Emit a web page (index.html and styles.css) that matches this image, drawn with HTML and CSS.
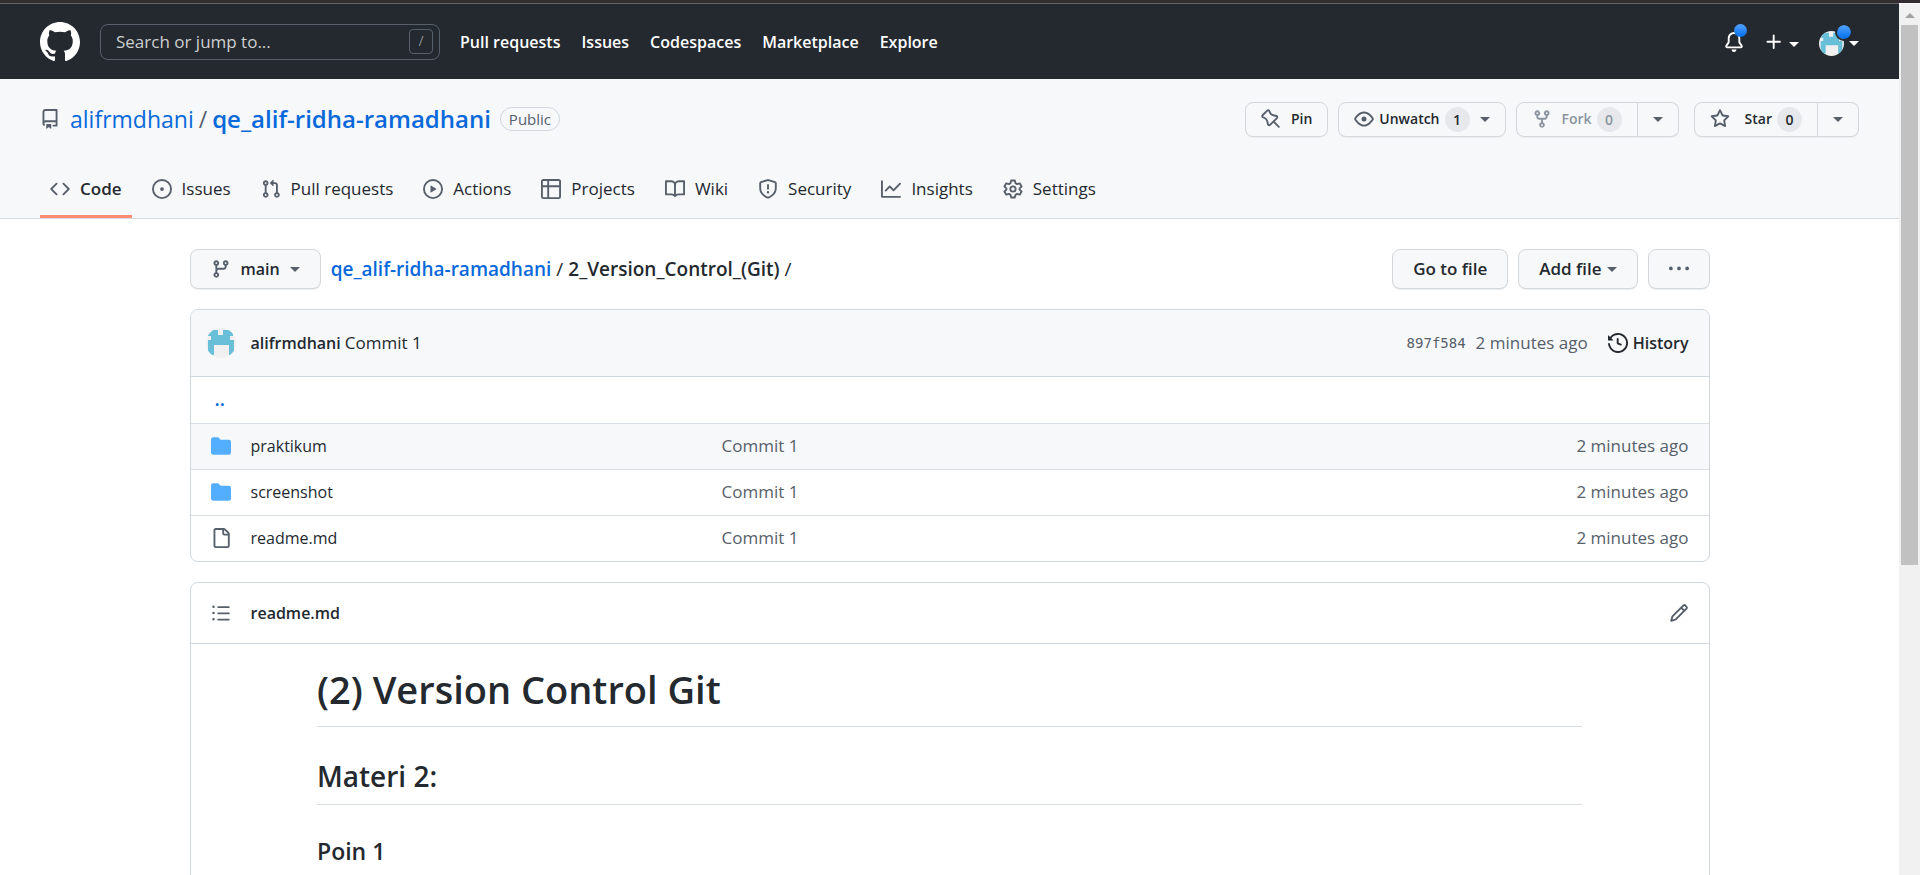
FILE: index.html
```html
<!DOCTYPE html>
<html lang="en">
<head>
<meta charset="utf-8">
<title>qe_alif-ridha-ramadhani/2_Version_Control_(Git)</title>
<link rel="stylesheet" href="styles.css">
</head>
<body>
<svg class="sprite" aria-hidden="true">
  <symbol id="mark" viewBox="0 0 16 16"><path d="M8 0C3.58 0 0 3.58 0 8c0 3.54 2.29 6.53 5.47 7.59.4.07.55-.17.55-.38 0-.19-.01-.82-.01-1.49-2.01.37-2.53-.49-2.69-.94-.09-.23-.48-.94-.82-1.13-.28-.15-.68-.52-.01-.53.63-.01 1.08.58 1.23.82.72 1.21 1.87.87 2.33.66.07-.52.28-.87.51-1.07-1.78-.2-3.64-.89-3.64-3.95 0-.87.31-1.59.82-2.15-.08-.2-.36-1.02.08-2.12 0 0 .67-.21 2.2.82.64-.18 1.32-.27 2-.27.68 0 1.36.09 2 .27 1.53-1.04 2.2-.82 2.2-.82.44 1.1.16 1.92.08 2.12.51.56.82 1.27.82 2.15 0 3.07-1.87 3.75-3.65 3.95.29.25.54.73.54 1.48 0 1.07-.01 1.93-.01 2.2 0 .21.15.46.55.38A8.013 8.013 0 0 0 16 8c0-4.42-3.58-8-8-8z"/></symbol>
  <symbol id="bell" viewBox="0 0 16 16"><path d="M8 16a2 2 0 001.985-1.75c.017-.137-.097-.25-.235-.25h-3.5c-.138 0-.252.113-.235.25A2 2 0 008 16z"/><path fill-rule="evenodd" d="M8 1.5A3.5 3.5 0 004.5 5v2.947c0 .346-.102.683-.294.97l-1.703 2.556a.018.018 0 00-.003.01l.001.006c0 .002.002.004.004.006a.017.017 0 00.006.004l.007.001h10.964l.007-.001a.016.016 0 00.006-.004.016.016 0 00.004-.006l.001-.007a.017.017 0 00-.003-.01l-1.703-2.554a1.75 1.75 0 01-.294-.97V5A3.5 3.5 0 008 1.5zM3 5a5 5 0 0110 0v2.947c0 .05.015.098.042.139l1.703 2.555A1.518 1.518 0 0113.482 13H2.518a1.518 1.518 0 01-1.263-2.36l1.703-2.554A.25.25 0 003 7.947V5z"/></symbol>
  <symbol id="plus" viewBox="0 0 16 16"><path d="M7.75 2a.75.75 0 01.75.75V7h4.25a.75.75 0 110 1.5H8.5v4.25a.75.75 0 11-1.5 0V8.5H2.75a.75.75 0 010-1.5H7V2.75A.75.75 0 017.75 2z"/></symbol>
  <symbol id="repo" viewBox="0 0 16 16"><path fill-rule="evenodd" d="M2 2.5A2.5 2.5 0 014.5 0h8.75a.75.75 0 01.75.75v12.5a.75.75 0 01-.75.75h-2.5a.75.75 0 110-1.5h1.75v-2h-8a1 1 0 00-.714 1.7.75.75 0 01-1.072 1.05A2.495 2.495 0 012 11.5v-9zm10.5-1V9h-8c-.356 0-.694.074-1 .208V2.5a1 1 0 011-1h8zM5 12.25v3.25a.25.25 0 00.4.2l1.45-1.087a.25.25 0 01.3 0L8.6 15.7a.25.25 0 00.4-.2v-3.25a.25.25 0 00-.25-.25h-3.5a.25.25 0 00-.25.25z"/></symbol>
  <symbol id="pin" viewBox="0 0 16 16"><path fill-rule="evenodd" d="M4.456.734a1.75 1.75 0 012.826.504l.613 1.327a3.081 3.081 0 002.084 1.707l2.454.584c1.332.317 1.8 1.972.832 2.94L11.06 10l3.72 3.72a.75.75 0 11-1.061 1.06L10 11.06l-2.204 2.205c-.968.968-2.623.5-2.94-.832l-.584-2.454a3.081 3.081 0 00-1.707-2.084l-1.327-.613a1.75 1.75 0 01-.504-2.826L4.456.734zM5.92 1.866a.25.25 0 00-.404-.072L1.794 5.516a.25.25 0 00.072.404l1.328.613A4.582 4.582 0 015.73 9.63l.584 2.454a.25.25 0 00.42.12l5.47-5.47a.25.25 0 00-.12-.42L9.63 5.73a4.581 4.581 0 01-3.098-2.537L5.92 1.866z"/></symbol>
  <symbol id="eye" viewBox="0 0 16 16"><path fill-rule="evenodd" d="M1.679 7.932c.412-.621 1.242-1.75 2.366-2.717C5.175 4.242 6.527 3.5 8 3.5c1.473 0 2.824.742 3.955 1.715 1.124.967 1.954 2.096 2.366 2.717a.119.119 0 010 .136c-.412.621-1.242 1.75-2.366 2.717C10.825 11.758 9.473 12.5 8 12.5c-1.473 0-2.824-.742-3.955-1.715C2.92 9.818 2.09 8.69 1.679 8.068a.119.119 0 010-.136zM8 2c-1.981 0-3.67.992-4.933 2.078C1.797 5.169.88 6.423.43 7.1a1.619 1.619 0 000 1.798c.45.678 1.367 1.932 2.637 3.024C4.329 13.008 6.019 14 8 14c1.981 0 3.67-.992 4.933-2.078 1.27-1.091 2.187-2.345 2.637-3.023a1.619 1.619 0 000-1.798c-.45-.678-1.367-1.932-2.637-3.023C11.671 2.992 9.981 2 8 2zm0 8a2 2 0 100-4 2 2 0 000 4z"/></symbol>
  <symbol id="fork" viewBox="0 0 16 16"><path fill-rule="evenodd" d="M5 3.25a.75.75 0 11-1.5 0 .75.75 0 011.5 0zm0 2.122a2.25 2.25 0 10-1.5 0v.878A2.25 2.25 0 005.75 8.5h1.5v2.128a2.251 2.251 0 101.5 0V8.5h1.5a2.25 2.25 0 002.25-2.25v-.878a2.25 2.25 0 10-1.5 0v.878a.75.75 0 01-.75.75h-4.5A.75.75 0 015 6.25v-.878zm3.75 7.378a.75.75 0 11-1.5 0 .75.75 0 011.5 0zm3-8.75a.75.75 0 100-1.5.75.75 0 000 1.5z"/></symbol>
  <symbol id="star" viewBox="0 0 16 16"><path fill-rule="evenodd" d="M8 .25a.75.75 0 01.673.418l1.882 3.815 4.21.612a.75.75 0 01.416 1.279l-3.046 2.97.719 4.192a.75.75 0 01-1.088.791L8 12.347l-3.766 1.98a.75.75 0 01-1.088-.79l.72-4.194L.818 6.374a.75.75 0 01.416-1.28l4.21-.611L7.327.668A.75.75 0 018 .25zm0 2.445L6.615 5.5a.75.75 0 01-.564.41l-3.097.45 2.24 2.184a.75.75 0 01.216.664l-.528 3.084 2.769-1.456a.75.75 0 01.698 0l2.77 1.456-.53-3.084a.75.75 0 01.216-.664l2.24-2.183-3.096-.45a.75.75 0 01-.564-.41L8 2.694z"/></symbol>
  <symbol id="code" viewBox="0 0 16 16"><path fill-rule="evenodd" d="M4.72 3.22a.75.75 0 011.06 1.06L2.06 8l3.72 3.72a.75.75 0 11-1.06 1.06L.47 8.53a.75.75 0 010-1.06l4.25-4.25zm6.56 0a.75.75 0 10-1.06 1.06L13.94 8l-3.72 3.72a.75.75 0 101.06 1.06l4.25-4.25a.75.75 0 000-1.06l-4.25-4.25z"/></symbol>
  <symbol id="issue" viewBox="0 0 16 16"><path d="M8 9.5a1.5 1.5 0 100-3 1.5 1.5 0 000 3z"/><path fill-rule="evenodd" d="M8 0a8 8 0 100 16A8 8 0 008 0zM1.5 8a6.5 6.5 0 1113 0 6.5 6.5 0 01-13 0z"/></symbol>
  <symbol id="pull" viewBox="0 0 16 16"><path fill-rule="evenodd" d="M7.177 3.073L9.573.677A.25.25 0 0110 .854v4.792a.25.25 0 01-.427.177L7.177 3.427a.25.25 0 010-.354zM3.75 2.5a.75.75 0 100 1.5.75.75 0 000-1.5zm-2.25.75a2.25 2.25 0 113 2.122v5.256a2.251 2.251 0 11-1.5 0V5.372A2.25 2.25 0 011.5 3.25zM11 2.5h-1V4h1a1 1 0 011 1v5.628a2.251 2.251 0 101.5 0V5A2.5 2.5 0 0011 2.5zm1 10.25a.75.75 0 111.5 0 .75.75 0 01-1.5 0zM3.75 12a.75.75 0 100 1.5.75.75 0 000-1.5z"/></symbol>
  <symbol id="play" viewBox="0 0 16 16"><path fill-rule="evenodd" d="M1.5 8a6.5 6.5 0 1113 0 6.5 6.5 0 01-13 0zM8 0a8 8 0 100 16A8 8 0 008 0zM6.379 5.227A.25.25 0 006 5.442v5.117a.25.25 0 00.379.214l4.264-2.559a.25.25 0 000-.428L6.379 5.227z"/></symbol>
  <symbol id="table" viewBox="0 0 16 16"><path fill-rule="evenodd" d="M0 1.75C0 .784.784 0 1.75 0h12.5C15.216 0 16 .784 16 1.75v12.5A1.75 1.75 0 0114.25 16H1.75A1.75 1.75 0 010 14.25V1.75zM1.5 6.5v7.75c0 .138.112.25.25.25H5v-8H1.500zM5 5H1.500V1.750a.25.25 0 01.25-.25H5V5zm1.500 1.500v8h7.750a.25.25 0 00.25-.25V6.500h-8zm8-1.500h-8V1.500h7.750a.25.25 0 01.25.25V5z"/></symbol>
  <symbol id="book" viewBox="0 0 16 16"><path fill-rule="evenodd" d="M0 1.75A.75.75 0 01.75 1h4.253c1.227 0 2.317.59 3 1.501A3.744 3.744 0 0111.006 1h4.245a.75.75 0 01.75.75v10.5a.75.75 0 01-.75.75h-4.507a2.25 2.25 0 00-1.591.659l-.622.621a.75.75 0 01-1.060 0l-.622-.621A2.250 2.250 0 005.258 13H.750a.75.75 0 01-.75-.75V1.750zm8.755 3a2.250 2.250 0 012.250-2.250H14.500v9h-3.757c-.71 0-1.400.201-1.992.572l.004-7.322zm-1.504 7.324l.004-5.073-.002-2.253A2.250 2.250 0 005.003 2.500H1.500v9h3.757a3.750 3.750 0 011.994.574z"/></symbol>
  <symbol id="shield" viewBox="0 0 16 16"><path fill-rule="evenodd" d="M7.467.133a1.750 1.750 0 011.066 0l5.250 1.680A1.750 1.750 0 0115 3.480V7c0 1.566-.32 3.182-1.303 4.682-.983 1.498-2.585 2.813-5.032 3.855a1.700 1.700 0 01-1.330 0c-2.447-1.042-4.049-2.357-5.032-3.855C1.320 10.182 1 8.566 1 7V3.480a1.750 1.750 0 011.217-1.667l5.250-1.680zm.61 1.429a.25.25 0 00-.153 0l-5.250 1.680a.25.25 0 00-.174.238V7c0 1.358.275 2.666 1.057 3.860.784 1.194 2.121 2.340 4.366 3.297a.2.2 0 00.154 0c2.245-.956 3.582-2.104 4.366-3.298C13.225 9.666 13.500 8.360 13.500 7V3.480a.25.25 0 00-.174-.237l-5.250-1.680zM9 10.500a1 1 0 11-2 0 1 1 0 012 0zm-.25-5.750a.75.75 0 00-1.500 0v3a.75.75 0 001.500 0v-3z"/></symbol>
  <symbol id="graph" viewBox="0 0 16 16"><path fill-rule="evenodd" d="M1.500 1.750a.75.75 0 00-1.500 0v12.500c0 .414.336.75.75.75h14.500a.75.75 0 000-1.500H1.500V1.750zm14.280 2.530a.75.75 0 00-1.060-1.060L10 7.940 7.530 5.470a.75.75 0 00-1.060 0L3.220 8.720a.75.75 0 001.060 1.060L7 7.060l2.470 2.470a.75.75 0 001.060 0l5.250-5.250z"/></symbol>
  <symbol id="gear" viewBox="0 0 24 24"><path fill="none" stroke="currentColor" stroke-width="2.200" stroke-linejoin="round" d="M9.800 1.800h4.400l.8 3.200 1.900 1.100 3.200-.9 2.200 3.800-2.400 2.300v1.400l2.400 2.300-2.200 3.800-3.200-.9-1.900 1.100-.8 3.200H9.800L9 19l-1.900-1.100-3.200.9L1.700 15l2.400-2.300v-1.400L1.700 9l2.200-3.800 3.200.9L9 5z"/><circle cx="12" cy="12" r="3.200" fill="none" stroke="currentColor" stroke-width="2.200"/></symbol>
  <symbol id="branch" viewBox="0 0 16 16"><path fill-rule="evenodd" d="M11.750 2.500a.75.75 0 100 1.500.75.75 0 000-1.500zm-2.250.75a2.250 2.250 0 113 2.122V6A2.500 2.500 0 0110 8.500H6a1 1 0 00-1 1v1.128a2.251 2.251 0 11-1.500 0V5.372a2.250 2.250 0 111.500 0v1.836A2.492 2.492 0 016 7h4a1 1 0 001-1v-.628A2.250 2.250 0 019.500 3.250zM4.250 12a.75.75 0 100 1.500.75.75 0 000-1.500zM3.500 3.250a.75.75 0 111.500 0 .75.75 0 01-1.500 0z"/></symbol>
  <symbol id="dots" viewBox="0 0 16 16"><path d="M8 9a1.500 1.500 0 100-3 1.500 1.500 0 000 3zM1.500 9a1.500 1.500 0 100-3 1.500 1.500 0 000 3zm13 0a1.500 1.500 0 100-3 1.500 1.500 0 000 3z"/></symbol>
  <symbol id="history" viewBox="0 0 16 16"><path fill-rule="evenodd" d="M1.643 3.143L.427 1.927A.25.25 0 000 2.104V5.750c0 .138.112.25.25.25h3.646a.25.25 0 00.177-.427L2.715 4.215a6.500 6.500 0 11-1.180 4.458.75.75 0 10-1.493.154 8.001 8.001 0 101.600-5.684zM7.750 4a.75.75 0 01.75.75v2.992l2.028.812a.75.75 0 01-.557 1.392l-2.500-1A.75.75 0 017 8.250v-3.500A.75.75 0 017.750 4z"/></symbol>
  <symbol id="folder" viewBox="0 0 16 16"><path d="M1.750 1A1.750 1.750 0 000 2.750v10.500C0 14.216.784 15 1.750 15h12.500A1.750 1.750 0 0016 13.250v-8.500A1.750 1.750 0 0014.250 3h-6.500a.25.25 0 01-.2-.1l-.9-1.200c-.33-.44-.85-.7-1.400-.7h-3.500z"/></symbol>
  <symbol id="file" viewBox="0 0 16 16"><path fill-rule="evenodd" d="M3.750 1.500a.25.25 0 00-.25.25v12.500c0 .138.112.25.25.25h9.500a.25.25 0 00.25-.25V6h-2.750A1.750 1.750 0 019 4.250V1.500H3.750zm6.750.062V4.250c0 .138.112.25.25.25h2.688l-.011-.013-2.914-2.914-.013-.011zM2 1.750C2 .784 2.784 0 3.750 0h6.586c.464 0 .909.184 1.237.513l2.914 2.914c.329.328.513.773.513 1.237v9.586A1.750 1.750 0 0113.250 16h-9.500A1.750 1.750 0 012 14.250V1.750z"/></symbol>
  <symbol id="list" viewBox="0 0 16 16"><path fill-rule="evenodd" d="M2 4a1 1 0 100-2 1 1 0 000 2zm3.750-1.500a.75.75 0 000 1.500h8.500a.75.75 0 000-1.500h-8.500zm0 5a.75.75 0 000 1.500h8.500a.75.75 0 000-1.500h-8.500zm0 5a.75.75 0 000 1.500h8.500a.75.75 0 000-1.500h-8.500zM3 8a1 1 0 11-2 0 1 1 0 012 0zm-1 6a1 1 0 100-2 1 1 0 000 2z"/></symbol>
  <symbol id="pencil" viewBox="0 0 16 16"><path fill-rule="evenodd" d="M11.013 1.427a1.750 1.750 0 012.474 0l1.086 1.086a1.750 1.750 0 010 2.474l-8.610 8.610c-.21.21-.47.364-.756.445l-3.251.93a.75.75 0 01-.927-.928l.929-3.250a1.750 1.750 0 01.445-.758l8.610-8.610zm1.414 1.060a.25.25 0 00-.354 0L10.811 3.750l1.439 1.440 1.263-1.263a.25.25 0 000-.354l-1.086-1.086zM11.189 6.250L9.750 4.810l-6.286 6.287a.25.25 0 00-.064.108l-.558 1.953 1.953-.558a.249.249 0 00.108-.064l6.286-6.286z"/></symbol>
  <symbol id="avatar" viewBox="0 0 30 30"><path fill="#f0f0f0" d="M0 0h30v30H0z"/><path fill="#69bfd8" d="M2 2h10v5h5V2h10v6h-3v4h4v15h-5V17H8v10H2V12h3V8H2z"/></symbol>
</svg>
<div class="window">
  <div class="page">
    <header class="topbar">
      <a class="logo" href="#" aria-label="Homepage"><svg><use href="#mark"/></svg></a>
      <label class="search"><input type="text" aria-label="Search" placeholder="Search or jump to..."><kbd>/</kbd></label>
      <nav class="topnav">
        <a href="#">Pull requests</a><a href="#">Issues</a><a href="#">Codespaces</a><a href="#">Marketplace</a><a href="#">Explore</a>
      </nav>
      <div class="tools">
        <button class="tool bell" aria-label="Notifications"><svg class="icon"><use href="#bell"/></svg><span class="dot"></span></button>
        <button class="tool create" aria-label="Create new"><svg class="icon"><use href="#plus"/></svg><span class="caret"></span></button>
        <button class="tool user" aria-label="Account"><svg class="face"><use href="#avatar"/></svg><span class="dot ringed"></span><span class="caret"></span></button>
      </div>
    </header>

    <section class="repohead">
      <div class="titlerow">
        <svg class="icon muted"><use href="#repo"/></svg>
        <h1 class="title"><a href="#">alifrmdhani</a><span>/</span><a class="strong" href="#">qe_alif-ridha-ramadhani</a></h1>
        <span class="pill">Public</span>
        <div class="actions">
          <button class="btn small"><svg class="icon"><use href="#pin"/></svg><span class="lead">Pin</span></button>
          <button class="btn small watch"><svg class="icon"><use href="#eye"/></svg>Unwatch<span class="count">1</span><span class="caret"></span></button>
          <div class="split forks">
            <button class="btn small" disabled><svg class="icon"><use href="#fork"/></svg><span class="lead">Fork</span><span class="count">0</span></button><button class="btn small more" aria-label="Fork options"><span class="caret"></span></button>
          </div>
          <div class="split stars">
            <button class="btn small"><svg class="icon"><use href="#star"/></svg><span class="lead">Star</span><span class="count">0</span></button><button class="btn small more" aria-label="Star options"><span class="caret"></span></button>
          </div>
        </div>
      </div>
      <nav class="tabs">
        <a class="current" href="#"><svg class="icon"><use href="#code"/></svg>Code</a>
        <a href="#"><svg class="icon"><use href="#issue"/></svg>Issues</a>
        <a href="#"><svg class="icon"><use href="#pull"/></svg>Pull requests</a>
        <a href="#"><svg class="icon"><use href="#play"/></svg>Actions</a>
        <a href="#"><svg class="icon"><use href="#table"/></svg>Projects</a>
        <a href="#"><svg class="icon"><use href="#book"/></svg>Wiki</a>
        <a href="#"><svg class="icon"><use href="#shield"/></svg>Security</a>
        <a href="#"><svg class="icon"><use href="#graph"/></svg>Insights</a>
        <a href="#"><svg class="icon"><use href="#gear"/></svg>Settings</a>
      </nav>
    </section>

    <main class="content">
      <div class="filebar">
        <button class="btn branch"><svg class="icon"><use href="#branch"/></svg>main<span class="caret"></span></button>
        <div class="crumbs"><a href="#">qe_alif-ridha-ramadhani</a><span>/</span><strong>2_Version_Control_(Git)</strong><span>/</span></div>
        <button class="btn">Go to file</button>
        <button class="btn add">Add file<span class="caret"></span></button>
        <button class="btn kebab" aria-label="More options"><svg class="icon"><use href="#dots"/></svg></button>
      </div>

      <section class="box">
        <div class="commit">
          <svg class="portrait"><use href="#avatar"/></svg>
          <p class="message"><a class="author" href="#">alifrmdhani</a> <a class="subject" href="#">Commit 1</a></p>
          <a class="sha" href="#">897f584</a>
          <span class="when">2 minutes ago</span>
          <a class="history" href="#"><svg class="icon"><use href="#history"/></svg>History</a>
        </div>
        <table class="files">
          <tbody>
            <tr><td class="kind"><a class="up" href="#">..</a></td><td class="name"></td><td></td><td></td></tr>
            <tr class="hover"><td class="kind"><svg class="icon folder"><use href="#folder"/></svg></td><td class="name"><a href="#">praktikum</a></td><td class="note">Commit 1</td><td class="age">2 minutes ago</td></tr>
            <tr><td class="kind"><svg class="icon folder"><use href="#folder"/></svg></td><td class="name"><a href="#">screenshot</a></td><td class="note">Commit 1</td><td class="age">2 minutes ago</td></tr>
            <tr><td class="kind"><svg class="icon muted"><use href="#file"/></svg></td><td class="name"><a href="#">readme.md</a></td><td class="note">Commit 1</td><td class="age">2 minutes ago</td></tr>
          </tbody>
        </table>
      </section>

      <section class="box readme">
        <div class="readmehead">
          <button class="plain" aria-label="Contents"><svg class="icon"><use href="#list"/></svg></button>
          <a href="#">readme.md</a>
          <button class="plain edit" aria-label="Edit file"><svg class="icon"><use href="#pencil"/></svg></button>
        </div>
        <article class="markdown">
          <h1>(2) Version Control Git</h1>
          <h2>Materi 2:</h2>
          <h3>Poin 1</h3>
        </article>
      </section>
    </main>
  </div>
  <div class="scrollbar" aria-hidden="true"><span class="arrow"></span><span class="thumb"></span></div>
</div>
</body>
</html>
```
FILE: styles.css
```css
* { box-sizing: border-box; }

body {
  margin: 0;
  background: #fff;
  color: #24292f;
  font: 16px/26px "Open Sans", "Noto Sans", sans-serif;
}

a { color: inherit; text-decoration: none; }
h1, h2, h3, p { margin: 0; }
button, input { font: inherit; color: inherit; }
svg { display: block; fill: currentColor; }

.sprite { position: absolute; width: 0; height: 0; }
.icon { width: 20px; height: 20px; flex: none; }
.muted { color: #57606a; }

.caret {
  flex: none;
  width: 10px;
  border: 5px solid transparent;
  border-top-color: currentColor;
  border-bottom: 0;
}

.window {
  display: flex;
  height: 100vh;
  overflow: hidden;
  border-top: 3px solid #332d32;
}
.page { flex: 1; min-width: 0; border-top: 1px solid #666; }

/* Scrollbar */
.scrollbar {
  display: flex;
  flex-direction: column;
  align-items: center;
  width: 21px;
  margin-top: 1px;
  padding-top: 9px;
  background: #f1f1f1;
}
.arrow {
  border: 5px solid transparent;
  border-bottom-color: #a3a3a3;
  border-top: 0;
}
.thumb { width: 17px; height: calc(62vh - 3px); margin-top: 7px; background: #c1c1c1; }

/* Top bar */
.topbar {
  display: flex;
  align-items: center;
  gap: 20px;
  height: 75px;
  padding: 0 40px;
  background: #24292f;
  color: #fff;
}
.logo svg { width: 40px; height: 40px; }
.search {
  display: flex;
  align-items: center;
  width: 340px;
  height: 36px;
  padding: 0 6px 0 15px;
  border: 1px solid #57606a;
  border-radius: 8px;
}
.search input {
  flex: 1;
  min-width: 0;
  padding: 0;
  border: 0;
  outline: 0;
  background: none;
  font-size: 17px;
}
.search input::placeholder { color: #cdcfd1; opacity: 1; }
.search kbd {
  width: 24px;
  height: 25px;
  border: 1px solid #57606a;
  border-radius: 4px;
  color: #8c9196;
  font: 14px/22px "Open Sans", sans-serif;
  text-align: center;
}
.topnav { display: flex; gap: 21px; font-weight: 600; }
.tools { display: flex; align-items: center; gap: 20px; margin-left: auto; }
.tool {
  position: relative;
  display: flex;
  align-items: center;
  gap: 5px;
  padding: 0;
  border: 0;
  background: none;
}
.create .caret { margin-top: 5px; }
.user { padding-top: 4px; }
.dot {
  position: absolute;
  top: -8px;
  right: -3px;
  width: 13px;
  height: 13px;
  border-radius: 50%;
  background: linear-gradient(#54a3ff, #006eed);
}
.ringed {
  top: -4px;
  right: 6px;
  width: 18px;
  height: 18px;
  border: 2px solid #24292f;
  background-clip: padding-box;
}
.face { width: 25px; height: 25px; border-radius: 50%; }

/* Repository header */
.repohead { background: #f6f8fa; border-bottom: 1px solid #d5dae1; }
.titlerow {
  display: flex;
  align-items: center;
  padding: 22px 40px 0;
}
.title {
  display: flex;
  gap: 5px;
  margin: 0 9px 0 10px;
  color: #57606a;
  font-size: 23px;
  font-weight: 400;
  line-height: 36px;
}
.title a { color: #0969da; }
.title .strong { font-size: 24px; font-weight: 600; }
.pill {
  padding: 0 8px;
  border: 1px solid #d0d7de;
  border-radius: 12px;
  color: #57606a;
  font-size: 15px;
  font-weight: 500;
  line-height: 22px;
}
.actions { display: flex; gap: 10px; margin-left: auto; }
.forks { margin-right: 5px; }

.btn {
  display: flex;
  align-items: center;
  justify-content: center;
  gap: 10px;
  height: 40px;
  padding: 0 20px;
  border: 1px solid #d5d8da;
  border-radius: 8px;
  background: #f6f8fa;
  box-shadow: 0 1px 0 #eceef0;
  font-size: 17px;
  font-weight: 600;
  white-space: nowrap;
}
.btn .icon, .btn .caret { color: #57606a; }
.small { height: 35px; padding: 0 15px; gap: 5px; font-size: 14px; }
.small .lead { margin-left: 5px; }
.stars .lead { margin-left: 10px; }
.btn:disabled, .btn:disabled .icon { color: #8c959f; }
.watch .caret { margin-left: 5px; }
.count {
  width: 25px;
  border-radius: 13px;
  background: #e6e8eb;
  line-height: 25px;
  text-align: center;
}
.split { display: flex; }
.split .btn:first-child { border-radius: 8px 0 0 8px; }
.split .more { border-left: 0; border-radius: 0 8px 8px 0; }

.tabs { display: flex; gap: 10px; padding: 22px 40px 0; font-size: 17px; }
.tabs a {
  display: flex;
  align-items: center;
  gap: 10px;
  padding: 18px 10px 14px;
  border-bottom: 3px solid transparent;
  line-height: 24px;
}
.tabs .icon { color: #57606a; }
.tabs .current { border-color: #fd8c73; font-weight: 600; }

/* File browser */
.content { max-width: 1600px; margin: 0 auto; padding: 30px 40px; }
.filebar { display: flex; align-items: center; gap: 10px; margin-bottom: 20px; }
.branch { font-size: 16px; }
.crumbs { display: flex; gap: 5px; margin-right: auto; font-size: 19px; }
.crumbs a { color: #0969da; font-weight: 600; }
.crumbs strong { font-weight: 600; }
.add { gap: 5px; }

.box { border: 1px solid #d0d7de; border-radius: 8px; overflow: hidden; }
.commit {
  display: flex;
  align-items: center;
  height: 67px;
  padding: 0 20px 0 15px;
  border-bottom: 1px solid #d0d7de;
  background: #f6f8fa;
}
.portrait { width: 30px; height: 30px; margin-right: 15px; border-radius: 50%; }
.message { margin-right: auto; }
.author, .history { font-weight: 600; }
.sha { margin-right: 10px; color: #57606a; font: 14px "DejaVu Sans Mono", monospace; }
.when { color: #57606a; }
.subject, .when, .note, .age { font-size: 17px; }
.history { display: flex; align-items: center; gap: 5px; margin-left: 20px; }

.files { width: 100%; border-collapse: collapse; table-layout: fixed; }
.files td { height: 46px; padding: 0; }
.files tr + tr td { border-top: 1px solid #d8dee4; }
.files .kind { width: 60px; padding-left: 20px; }
.files .name { width: 471px; }
.up { margin-left: 4px; color: #0969da; font-size: 19px; font-weight: 600; }
.hover { background: #f6f8fa; }
.folder { color: #54aeff; }
.note, .age { color: #57606a; }
.files .age { padding-right: 20px; text-align: right; }

/* Readme */
.readme { margin-top: 20px; }
.readmehead {
  display: flex;
  align-items: center;
  height: 61px;
  padding: 0 20px;
  border-bottom: 1px solid #d0d7de;
  font-weight: 600;
}
.plain { padding: 0; margin-right: 20px; border: 0; background: none; color: #57606a; }
.edit { margin: 0 0 0 auto; }
.markdown { max-width: 1265px; margin: 0 auto; padding: 20px 0 40px; }
.markdown h1, .markdown h2, .markdown h3 { font-weight: 600; }
.markdown h1 {
  padding-bottom: 12px;
  border-bottom: 1px solid #d8dee4;
  font-size: 38px;
  line-height: 50px;
}
.markdown h2 {
  margin-top: 30px;
  padding-bottom: 9px;
  border-bottom: 1px solid #d8dee4;
  font-size: 28px;
  line-height: 38px;
}
.markdown h3 { margin-top: 30px; font-size: 23px; line-height: 32px; }
```
